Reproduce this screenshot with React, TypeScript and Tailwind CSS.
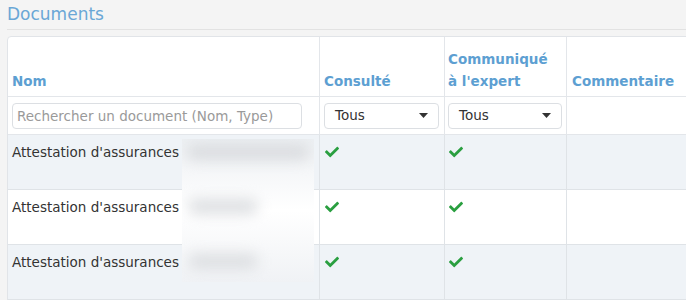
import { FaCheck } from 'react-icons/fa'

const rows = [
  { name: "Attestation d'assurances", seen: true, sent: true, striped: true },
  { name: "Attestation d'assurances", seen: true, sent: true, striped: false },
  { name: "Attestation d'assurances", seen: true, sent: true, striped: true },
]

function SelectBox() {
  return (
    <div className="flex h-[26px] items-center justify-between rounded-[4px] border border-[#dcdfe3] bg-white pl-[10px] pr-[10px] text-[13.5px] text-[#333]">
      <span>Tous</span>
      <svg width="9" height="5" viewBox="0 0 9 5" className="text-[#333]">
        <path d="M0 0h9L4.5 5z" fill="currentColor" />
      </svg>
    </div>
  )
}

function Check() {
  return <FaCheck className="text-[#2a9f40]" size={14} />
}

export default function App() {
  return (
    <div className="h-[300px] w-[686px] overflow-hidden bg-[#f4f4f4] font-['DejaVu_Sans',sans-serif] text-[13.5px] text-[#333]">
      <div className="pl-[7px]">
        <h2 className="border-b border-[#e2e2e2] pb-[4px] pt-[3px] text-[17px] leading-[22px] text-[#6aa7d6]">
          Documents
        </h2>

        <div className="relative mt-[6px] w-[760px] rounded-tl-[4px] border border-[#e1e4e8] bg-white">
          <div className="grid grid-cols-[312px_125px_122px_200px]">
            {/* header */}
            <div className="flex h-[60px] items-end border-b border-r border-[#e3e6ea] px-[4px] pb-[4px] font-bold leading-[22px] text-[#5d9fd2]">
              Nom
            </div>
            <div className="flex h-[60px] items-end border-b border-r border-[#e3e6ea] px-[4px] pb-[4px] font-bold leading-[22px] text-[#5d9fd2]">
              Consulté
            </div>
            <div className="flex h-[60px] items-end border-b border-r border-[#e3e6ea] px-[3px] pb-[4px] font-bold leading-[22px] text-[#5d9fd2]">
              Communiqué
              <br />à l'expert
            </div>
            <div className="flex h-[60px] items-end border-b border-[#e3e6ea] px-[5px] pb-[4px] font-bold leading-[22px] text-[#5d9fd2]">
              Commentaire
            </div>

            {/* filters */}
            <div className="flex h-[38px] items-center border-b border-r border-[#e3e6ea] px-[4px]">
              <input
                className="h-[26px] w-[290px] rounded-[4px] border border-[#dcdfe3] px-[4px] text-[13.5px] text-[#333] outline-none placeholder:text-[#9a9a9a]"
                placeholder="Rechercher un document (Nom, Type)"
              />
            </div>
            <div className="flex h-[38px] items-center border-b border-r border-[#e3e6ea] pl-[4px] pr-[5px]">
              <div className="w-full">
                <SelectBox />
              </div>
            </div>
            <div className="flex h-[38px] items-center border-b border-r border-[#e3e6ea] pl-[3px] pr-[4px]">
              <div className="w-full">
                <SelectBox />
              </div>
            </div>
            <div className="h-[38px] border-b border-[#e3e6ea]" />

            {/* rows */}
            {rows.map((r, i) => {
              const bg = r.striped ? 'bg-[#eff3f7]' : 'bg-white'
              return (
                <div key={i} className="contents">
                  <div className={`h-[55px] border-b border-r border-[#dfe3e7] px-[4px] pt-[8px] leading-[18px] ${bg}`}>
                    {r.name}
                  </div>
                  <div className={`h-[55px] border-b border-r border-[#dfe3e7] pl-[5px] pt-[10px] ${bg}`}>
                    {r.seen ? <Check /> : null}
                  </div>
                  <div className={`h-[55px] border-b border-r border-[#dfe3e7] pl-[4px] pt-[10px] ${bg}`}>
                    {r.sent ? <Check /> : null}
                  </div>
                  <div className={`h-[55px] border-b border-[#dfe3e7] ${bg}`} />
                </div>
              )
            })}
          </div>

          {/* masked document references */}
          <div className="absolute left-[174px] top-[102px] h-[143px] w-[132px] overflow-hidden bg-gradient-to-b from-[#edf0f3] via-white to-[#f0f2f5]">
            <div className="absolute left-[4px] top-[5px] h-[16px] w-[124px] rounded-full bg-[#dadcdf] blur-[7px]" />
            <div className="absolute left-[6px] top-[60px] h-[15px] w-[70px] rounded-full bg-[#dcdee1] blur-[7px]" />
            <div className="absolute left-[6px] top-[115px] h-[15px] w-[70px] rounded-full bg-[#dcdee1] blur-[7px]" />
          </div>
        </div>
      </div>
    </div>
  )
}
